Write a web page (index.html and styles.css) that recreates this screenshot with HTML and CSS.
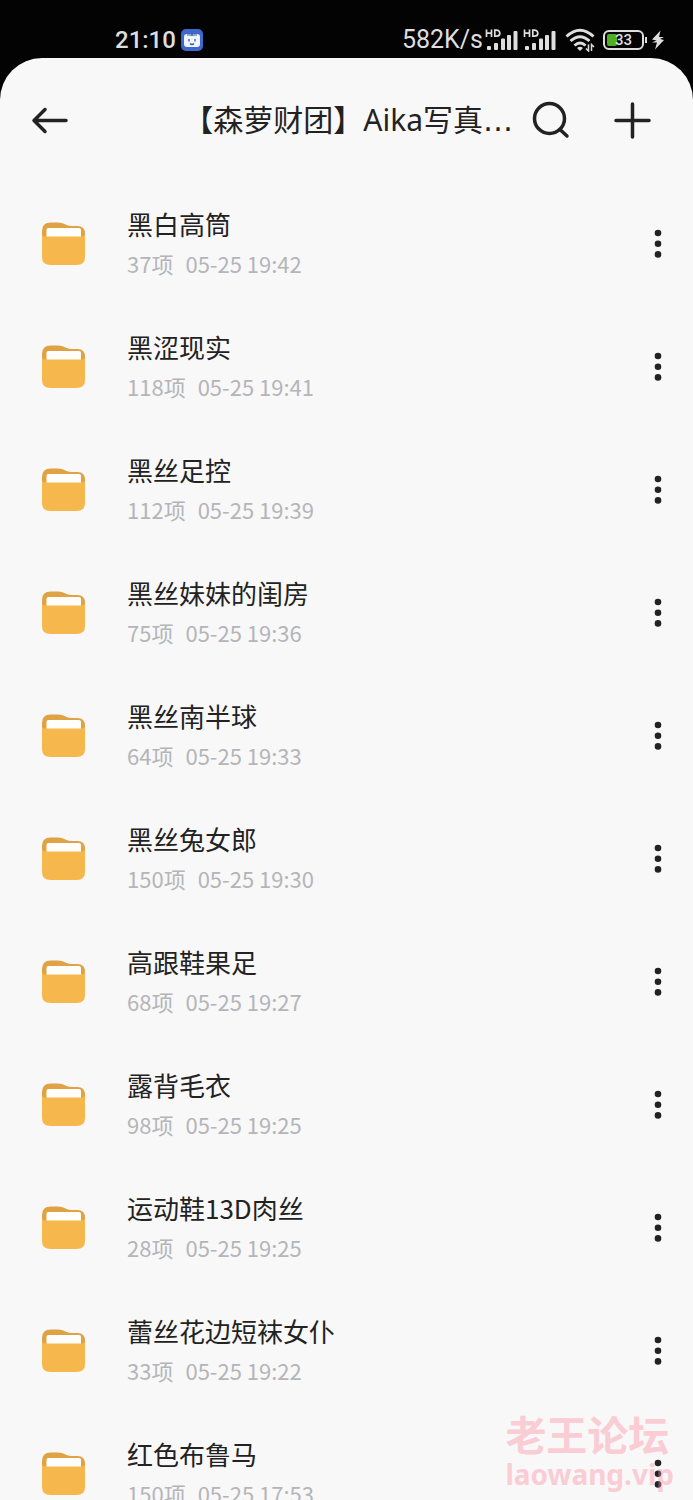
FILE: index.html
```html
<!DOCTYPE html>
<html lang="zh-CN">
<head>
<meta charset="utf-8">
<meta name="viewport" content="width=device-width, initial-scale=1">
<title>【森萝财团】Aika写真</title>
<link rel="stylesheet" href="styles.css">
</head>
<body>
<svg class="defs" aria-hidden="true">
  <symbol id="folder" viewBox="0 0 44 44">
    <path fill="#dfa244" d="M0.500 9Q0.500 0.500 9 0.500H16C20 0.500 22 1.500 25 3Q27 4 31 4H36Q43.500 4 43.500 12V25H0.500Z"/>
    <rect x="5" y="6" width="34.500" height="12" rx="2" fill="#fffefa"/>
    <path fill="#f6b74c" d="M0.500 13Q2 14.500 5 14.500H39Q42 14.500 43.500 13V35Q43.500 43 35 43H9Q0.500 43 0.500 35Z"/>
  </symbol>
  <symbol id="dots" viewBox="0 0 8 30">
    <g fill="#222"><circle cx="4" cy="4" r="3.300"/><circle cx="4" cy="14.700" r="3.300"/><circle cx="4" cy="25.400" r="3.300"/></g>
  </symbol>
  <symbol id="signal" viewBox="0 0 34 24">
    <g fill="none" stroke="#dedede" stroke-width="1.700"><path d="M1.500 1.500V9M6.500 1.500V9M1.500 5.200H6.500M9.800 2.200V8.200H11.300C16 8.200 16 2.200 11.300 2.200Z"/></g>
    <g fill="#dedede"><rect x="2" y="18" width="4" height="4" rx="1"/><rect x="9" y="15" width="4" height="7" rx="1"/><rect x="16" y="10.500" width="4" height="11.500" rx="1"/><rect x="22" y="7" width="4" height="15" rx="1"/><rect x="28.500" y="3" width="4" height="19" rx="1"/></g>
  </symbol>
</svg>
<div class="phone">
  <div class="status">
    <div class="status-left">
      <span class="clock">21:10</span>
      <svg class="app-badge" viewBox="0 0 22 22" aria-hidden="true">
        <rect width="22" height="22" rx="5" fill="#3f68cf"/>
        <rect x="3" y="5" width="16" height="13" rx="3" fill="#eef6ff"/>
        <path d="M6 6H16M11 4V7" stroke="#35558f" stroke-width="1.200"/>
        <path d="M8 10V12.500M14 10V12.500M9 14.500Q11 16.500 13 14.500" fill="none" stroke="#35558f" stroke-width="1.300"/>
      </svg>
    </div>
    <div class="status-right">
      <span class="speed">582K/s</span>
      <svg class="signal" aria-hidden="true"><use href="#signal"/></svg>
      <svg class="signal second" aria-hidden="true"><use href="#signal"/></svg>
      <svg class="wifi" viewBox="0 0 30 24" aria-hidden="true">
        <g fill="none" stroke="#dedede" stroke-width="3"><path d="M1.500 8.500Q15-4 28.500 8.500"/><path d="M5.500 13Q15 4.500 24.500 13"/><path d="M9.500 17.500Q15 12.500 20.500 17.500"/></g>
        <path d="M12 20Q15 17.500 18 20L15 23Z" fill="#dedede"/>
        <path d="M23.500 16.500V23L21 20.500M26.500 23V16.500L29 19" fill="none" stroke="#dedede" stroke-width="1.500"/>
      </svg>
      <span class="battery"><span class="battery-fill"></span><span class="battery-text">33</span></span>
      <svg class="bolt" viewBox="0 0 14 20" aria-hidden="true">
        <path d="M9.500 0.500L1 9.500 5.500 10.500 1 12.500H6L4 19.500 13 10 9 9 13 7H8Z" fill="#dedede"/>
      </svg>
    </div>
  </div>
  <main class="sheet">
    <header class="bar">
      <button class="icon-btn" aria-label="返回">
        <svg class="icon" viewBox="0 0 40 40" aria-hidden="true"><path d="M36 20.500H4M15 9.500L4 20.500 15 31.500"/></svg>
      </button>
      <h1 class="heading">【森萝财团】Aika写真<span class="ellipsis">…</span></h1>
      <button class="icon-btn" aria-label="搜索">
        <svg class="icon" viewBox="0 0 40 40" aria-hidden="true"><circle cx="18.500" cy="18.500" r="15"/><path d="M29.500 30L36 36"/></svg>
      </button>
      <button class="icon-btn add" aria-label="添加">
        <svg class="icon" viewBox="0 0 40 40" aria-hidden="true"><path d="M20.500 4V37M4 20.500H37"/></svg>
      </button>
    </header>
    <ul class="list">
      <li class="row"><svg class="folder" aria-hidden="true"><use href="#folder"/></svg><div class="info"><h2 class="name">黑白高筒</h2><p class="meta"><span>37项</span><time>05-25 19:42</time></p></div><button class="more" aria-label="更多"><svg class="dots"><use href="#dots"/></svg></button></li>
      <li class="row"><svg class="folder" aria-hidden="true"><use href="#folder"/></svg><div class="info"><h2 class="name">黑涩现实</h2><p class="meta"><span>118项</span><time>05-25 19:41</time></p></div><button class="more" aria-label="更多"><svg class="dots"><use href="#dots"/></svg></button></li>
      <li class="row"><svg class="folder" aria-hidden="true"><use href="#folder"/></svg><div class="info"><h2 class="name">黑丝足控</h2><p class="meta"><span>112项</span><time>05-25 19:39</time></p></div><button class="more" aria-label="更多"><svg class="dots"><use href="#dots"/></svg></button></li>
      <li class="row"><svg class="folder" aria-hidden="true"><use href="#folder"/></svg><div class="info"><h2 class="name">黑丝妹妹的闺房</h2><p class="meta"><span>75项</span><time>05-25 19:36</time></p></div><button class="more" aria-label="更多"><svg class="dots"><use href="#dots"/></svg></button></li>
      <li class="row"><svg class="folder" aria-hidden="true"><use href="#folder"/></svg><div class="info"><h2 class="name">黑丝南半球</h2><p class="meta"><span>64项</span><time>05-25 19:33</time></p></div><button class="more" aria-label="更多"><svg class="dots"><use href="#dots"/></svg></button></li>
      <li class="row"><svg class="folder" aria-hidden="true"><use href="#folder"/></svg><div class="info"><h2 class="name">黑丝兔女郎</h2><p class="meta"><span>150项</span><time>05-25 19:30</time></p></div><button class="more" aria-label="更多"><svg class="dots"><use href="#dots"/></svg></button></li>
      <li class="row"><svg class="folder" aria-hidden="true"><use href="#folder"/></svg><div class="info"><h2 class="name">高跟鞋果足</h2><p class="meta"><span>68项</span><time>05-25 19:27</time></p></div><button class="more" aria-label="更多"><svg class="dots"><use href="#dots"/></svg></button></li>
      <li class="row"><svg class="folder" aria-hidden="true"><use href="#folder"/></svg><div class="info"><h2 class="name">露背毛衣</h2><p class="meta"><span>98项</span><time>05-25 19:25</time></p></div><button class="more" aria-label="更多"><svg class="dots"><use href="#dots"/></svg></button></li>
      <li class="row"><svg class="folder" aria-hidden="true"><use href="#folder"/></svg><div class="info"><h2 class="name">运动鞋13D肉丝</h2><p class="meta"><span>28项</span><time>05-25 19:25</time></p></div><button class="more" aria-label="更多"><svg class="dots"><use href="#dots"/></svg></button></li>
      <li class="row"><svg class="folder" aria-hidden="true"><use href="#folder"/></svg><div class="info"><h2 class="name">蕾丝花边短袜女仆</h2><p class="meta"><span>33项</span><time>05-25 19:22</time></p></div><button class="more" aria-label="更多"><svg class="dots"><use href="#dots"/></svg></button></li>
      <li class="row"><svg class="folder" aria-hidden="true"><use href="#folder"/></svg><div class="info"><h2 class="name">红色布鲁马</h2><p class="meta"><span>150项</span><time>05-25 17:53</time></p></div><button class="more" aria-label="更多"><svg class="dots"><use href="#dots"/></svg></button></li>
    </ul>
  </main>
  <div class="watermark"><span class="mark-name">老王论坛</span><span class="mark-site">laowang.vip</span></div>
</div>
</body>
</html>
```
FILE: styles.css
```css
* { box-sizing: border-box; }
body {
  margin: 0;
  background: #030303;
  font-family: "Noto Sans CJK SC", "Noto Sans", sans-serif;
  color: #222;
}
h1, h2, p, ul { margin: 0; padding: 0; font-weight: 400; }
button { border: 0; padding: 0; background: none; display: flex; cursor: pointer; }
svg { display: block; flex: none; }
.defs { position: absolute; width: 0; height: 0; }

.phone {
  position: relative;
  display: flex;
  flex-direction: column;
  height: 100vh;
  overflow: hidden;
}
.status {
  flex: none;
  display: flex;
  justify-content: space-between;
  align-items: center;
  height: 58px;
  padding: 22px 28px 0 115px;
  color: #dedede;
  font-family: Roboto, sans-serif;
  line-height: 36px;
}
.status-left, .status-right { display: flex; align-items: center; }
.status-left { gap: 5px; }
.clock { font-size: 24px; font-weight: 500; }
.speed { font-size: 25px; margin-right: 2px; }
.app-badge { width: 22px; height: 22px; }
.signal { width: 34px; height: 24px; }
.second { margin-left: 4px; }
.wifi { width: 30px; height: 24px; margin-left: 8px; }
.battery {
  position: relative;
  display: flex;
  align-items: center;
  justify-content: center;
  width: 41px;
  height: 20px;
  margin: 0 7px 0 8px;
  border: 2px solid #dedede;
  border-radius: 6px;
}
.battery::after {
  content: "";
  position: absolute;
  right: -5px;
  width: 2px;
  height: 6px;
  background: #dedede;
}
.battery-fill {
  position: absolute;
  left: 2px;
  top: 2px;
  bottom: 2px;
  width: 10px;
  border-radius: 2px;
  background: #4fae23;
}
.battery-text { position: relative; font-size: 15px; font-weight: 500; line-height: 16px; }
.bolt { width: 14px; height: 20px; }

.sheet {
  flex: 1;
  min-height: 0;
  overflow: hidden;
  background: #f8f8f8;
  border-radius: 42px 42px 0 0;
}
.bar {
  display: flex;
  align-items: center;
  height: 124px;
  padding: 0 41px 0 30px;
}
.heading {
  flex: 1;
  min-width: 0;
  font-family: "Noto Sans", "Noto Sans CJK SC", sans-serif;
  font-size: 30px;
  line-height: 44px;
  text-align: right;
  white-space: nowrap;
  padding-right: 18px;
}
.ellipsis { font-family: "DejaVu Sans", sans-serif; line-height: 1; }
.icon { width: 40px; height: 40px; fill: none; stroke: #222; stroke-width: 3.5; stroke-linecap: round; stroke-linejoin: round; }
.add { margin-left: 41px; }

.list { list-style: none; }
.row {
  display: flex;
  align-items: center;
  height: 123px;
  padding: 0 31px 0 41px;
}
.folder { width: 45px; height: 44px; }
.info { flex: 1; min-width: 0; margin-left: 41px; padding-bottom: 3px; }
.name { font-size: 26px; line-height: 42px; }
.meta { display: flex; gap: 12px; font-size: 22px; line-height: 36px; color: #b5b5b8; }
.dots { width: 8px; height: 30px; }

.watermark {
  position: absolute;
  right: 19px;
  bottom: 8px;
  display: flex;
  flex-direction: column;
  font-weight: 700;
  color: #ff8ca0;
  opacity: 0.4;
  pointer-events: none;
}
.mark-name { font-size: 41px; line-height: 46px; }
.mark-site { font-family: "Noto Sans", sans-serif; font-size: 28px; line-height: 36px; }
```
